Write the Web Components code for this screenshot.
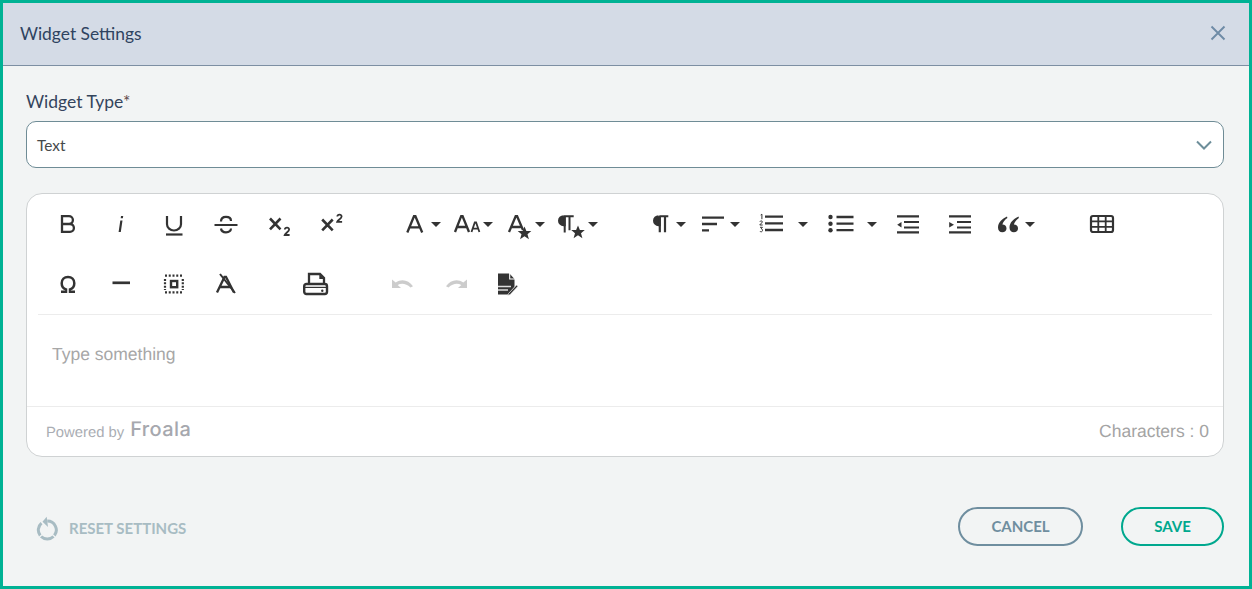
<!DOCTYPE html>
<html lang="en"><head><meta charset="utf-8"><title>Widget Settings</title>
<style>html,body{margin:0;padding:0;background:#f2f4f4}</style></head>
<body>
<widget-dialog>
  <dialog-header slot="header">Widget Settings</dialog-header>
  <select-field label="Widget Type" value="Text"></select-field>
  <rich-editor placeholder="Type something"></rich-editor>
  <dialog-actions></dialog-actions>
</widget-dialog>
<script>
const STAR=(x,y)=>`<path transform="translate(${x} ${y})" d="M0 -6.500l1.900 4.500h4.900l-3.800 3.200 1.400 5-4.400-2.900-4.400 2.900 1.400-5-3.800-3.200h4.900z" fill="#333"/>`;
const ICONS={
bold:'<path d="M6 4.200h7a3.900 3.900 0 0 1 0 7.800H6zM6 12h8a3.900 3.900 0 0 1 0 7.800H6z" fill="none" stroke="#333" stroke-width="2.300"/>',
italic:'<path d="M11.300 8.600h2.200l-1.700 11.400h-2.200zM12 4h2.200l-.3 2.200h-2.200z" fill="#333"/>',
underline:'<path d="M5 4v8.200a7 6.300 0 0 0 14 0V4" fill="none" stroke="#333" stroke-width="2.200"/><path d="M4 22.500h16.500" stroke="#333" stroke-width="2.200"/>',
strike:'<path d="M7 9.500c0-3.200 2.300-4.600 5-4.600s5 1.400 5 4M7 16.500c.3 2.600 2.400 3.800 5 3.800s4.800-1.300 5-3.800" fill="none" stroke="#333" stroke-width="2.200"/><path d="M.5 13h23" stroke="#333" stroke-width="2"/>',
sub:'<path d="M3 6.500l10.500 10.800M13.500 6.500L3 17.300" stroke="#333" stroke-width="2.600" fill="none"/><path d="M17.800 17.500c.3-2.600 4.400-2.400 4.300 0 0 2-3.800 3.500-4.400 5.500h4.900" fill="none" stroke="#333" stroke-width="1.800"/>',
sup:'<path d="M2.200 7.500l10.500 10.800M12.700 7.500L2.200 18.300" stroke="#333" stroke-width="2.600" fill="none"/><path d="M17.300 4.500c.3-2.600 4.400-2.400 4.300 0 0 2-3.800 3.500-4.400 5.300h4.900" fill="none" stroke="#333" stroke-width="1.800"/>',
fontA:'<path d="M4.300 20.500L11 4.200h1.400l6.800 16.300M6.500 15.300h10.500" fill="none" stroke="#333" stroke-width="2.300"/>',
size:'<path d="M0 20L6.200 4.200h1.400L14 20M2 15h10" fill="none" stroke="#333" stroke-width="2.300"/><path d="M16.500 20l3.300-9.600h1.300l3.300 9.600M17.700 16.700h5.500" fill="none" stroke="#333" stroke-width="1.800"/>',
colorStar:'<path d="M2 20L8.700 4.200h1.400L16 18M4.200 15h9.500" fill="none" stroke="#333" stroke-width="2.300"/>'+STAR(17.500,21),
paraStar:'<path d="M9.500 4.200a4.500 4.500 0 0 0 0 9h1.200V4.200h9" fill="#333" stroke="#333" stroke-width="2"/><path d="M10.700 4.200V20.500M15.500 4.200v14" stroke="#333" stroke-width="2" fill="none"/>'+STAR(24,20),
para:'<path d="M10.300 4.200h9M9.500 4.200a4.500 4.500 0 0 0 0 9h1.300V4.200" fill="#333" stroke="#333" stroke-width="2"/><path d="M10.800 4.200V20.200M16 4.200v16" stroke="#333" stroke-width="2.200" fill="none"/>',
align:'<path d="M2 5.700h22M2 12h15M2 18.300h7" stroke="#333" stroke-width="2.300" fill="none"/>',
ol:'<path d="M6 4.700h18M6 11.300h18M6 18h18" stroke="#333" stroke-width="2.300" fill="none"/><path d="M1.700 3l1.200-.8v5M.9 9.700c.3-1.200 2.600-1 2.500.3 0 1-2.400 1.700-2.600 3h2.900M1 15.300h2.400l-1.200 1.500c1.800 0 1.800 3-.1 3-.6 0-1-.2-1.200-.6" fill="none" stroke="#333" stroke-width="1"/>',
ul:'<circle cx="2.500" cy="5" r="2.200" fill="#333"/><circle cx="2.500" cy="11.700" r="2.200" fill="#333"/><circle cx="2.500" cy="18.200" r="2.200" fill="#333"/><path d="M8.500 5h17M8.500 11.700h17M8.500 18.200h17" stroke="#333" stroke-width="2.300" fill="none"/>',
outdent:'<path d="M1 4.300h22M8 10h15M8 15.500h15M1 20.300h22" stroke="#333" stroke-width="2.200" fill="none"/><path d="M5.500 10v5.500L1.200 12.700z" fill="#333"/>',
indent:'<path d="M1 4.300h22M9 10h14M9 15.500h14M1 20.300h22" stroke="#333" stroke-width="2.200" fill="none"/><path d="M1.200 10v5.500l4.800-2.800z" fill="#333"/>',
quote:'<path d="M11 4.500C6 7 2 10.500 2 15.500c0 2.700 1.700 4.800 4.400 4.800 2.300 0 4.100-1.700 4.100-3.900s-1.700-3.800-4.100-3.800c.5-2.500 2.600-5 5-6.600zM22.500 4.500C17.500 7 13.500 10.500 13.500 15.500c0 2.700 1.700 4.800 4.400 4.800 2.300 0 4.100-1.700 4.100-3.900s-1.700-3.800-4.100-3.800c.5-2.500 2.600-5 5-6.600z" fill="#333"/>',
table:'<rect x="2" y="4" width="22" height="16" rx="2" fill="none" stroke="#333" stroke-width="2.200"/><path d="M2 9.400h22M2 14.800h22M9.300 4v16M16.700 4v16" stroke="#333" stroke-width="1.800" fill="none"/>',
omega:'<path d="M5 19.800h5v-2.400c-2.800-1-4.300-3.300-4.300-6.200 0-3.700 2.600-6.200 6.300-6.200s6.300 2.500 6.300 6.200c0 2.900-1.500 5.200-4.300 6.200v2.400h5" fill="none" stroke="#333" stroke-width="2.500"/>',
hr:'<path d="M3.500 10.800h17.500" stroke="#333" stroke-width="2.700"/>',
select:'<path d="M3 3.600H21M3 20.400H21" stroke="#333" stroke-width="2.200" stroke-dasharray="2 1.750" fill="none"/><path d="M3 6.900V18M20.800 6.900V18" stroke="#333" stroke-width="2.200" stroke-dasharray="2 1.400" fill="none"/><path d="M7 3v0" /><rect x="9" y="9" width="6.200" height="6.200" fill="none" stroke="#333" stroke-width="2.400"/>',
clear:'<path d="M3 20.500L10.500 5h1.500l8 15.500M6 15h11" fill="none" stroke="#333" stroke-width="2.300"/><path d="M6 2L21 21" stroke="#333" stroke-width="2"/>',
print:'<path d="M6 12V2h11l4 4v6" fill="none" stroke="#333" stroke-width="2.300"/><path d="M16.300 2v5H21z" fill="#333"/><rect x="1.200" y="12" width="22.800" height="10" rx="2.200" fill="none" stroke="#333" stroke-width="2.400"/><path d="M1.500 15.400h22" stroke="#333" stroke-width="1.200"/><circle cx="19.300" cy="18.700" r="1.200" fill="#333"/>',
undo:'<path d="M1 7.500v8.500h9l-3.300-3c3.900-2.300 8.700-1.300 12.800 2.500l2.500-1.300C17.800 8.400 11 6.200 4.700 10.500z" fill="#ccc"/>',
redo:'<path d="M23 7.500v8.500h-9l3.300-3c-3.900-2.300-8.700-1.300-12.800 2.500L2 14.200C6.200 8.400 13 6.200 19.300 10.500z" fill="#ccc"/>',
pdf:'<path d="M2 1.500h11.500L18.500 7v8l-4.500 6-1 1.500H2z" fill="#333"/><path d="M13.700 1v6h5.500" fill="none" stroke="#fff" stroke-width="1.100"/><path d="M2 14.500h13M2 18h10" stroke="#ddd" stroke-width="1.300"/><path d="M12.500 21.500l8-8.500 1.500 1.300-8 8.500-2.300 .8z" fill="#333" stroke="#fff" stroke-width=".7"/>'
};

class WidgetDialog extends HTMLElement{constructor(){super();this.attachShadow({mode:'open'}).innerHTML=`<style>
:host{display:flex;flex-direction:column;box-sizing:border-box;width:1252px;height:589px;border:3px solid #00b294;background:#f2f4f4;font-family:Lato,sans-serif}
main{display:flex;flex-direction:column;flex:1;padding:24px 25px 0 23px}
</style><slot name="header"></slot><main><slot></slot></main>`}}

class DialogHeader extends HTMLElement{constructor(){super();this.attachShadow({mode:'open'}).innerHTML=`<style>
:host{display:flex;align-items:center;justify-content:space-between;box-sizing:border-box;height:63px;padding:0 23px 2px 17px;background:#d4dbe6;border-bottom:1px solid #7d8fa3;color:#2f4360;font:17.400px Lato,sans-serif}
svg{display:block;width:16px;height:16px}
</style><span><slot></slot></span><svg viewBox="0 0 16 16" aria-label="Close"><path d="M1.500 1.500l13 13M14.500 1.500l-13 13" stroke="#6e8ba6" stroke-width="1.900" fill="none"/></svg>`}}

class SelectField extends HTMLElement{constructor(){super();this.attachShadow({mode:'open'}).innerHTML=`<style>
:host{display:block;margin-bottom:25px}
label{display:block;font:17.500px/24px Lato,sans-serif;color:#34445c;margin-bottom:7px;height:24px}
i{font-style:normal;color:#5f4a4a}
.box{display:flex;align-items:center;justify-content:space-between;box-sizing:border-box;height:47px;padding:0 11px 0 10px;background:#fff;border:1px solid #6f8c96;border-radius:10px;font:15.400px Lato,sans-serif;color:#45494b}
svg{width:16px;height:10px;display:block}
</style><label>${this.getAttribute('label')}<i>*</i></label><div class="box"><span>${this.getAttribute('value')}</span><svg viewBox="0 0 16 10"><path d="M1 1.500l7 7 7-7" fill="none" stroke="#6d8e9a" stroke-width="2"/></svg></div>`}}

class ToolButton extends HTMLElement{constructor(){super();
const w=+this.getAttribute('w')||52.7,ic=this.getAttribute('icon'),c=this.getAttribute('caret');
const left=c!==null?0:(w-24)/2;
const caret=c!==null?`<b style="margin-left:${c-24-5}px"></b>`:'';
this.attachShadow({mode:'open'}).innerHTML=`<style>
:host{display:flex;align-items:center;flex:none;height:100%;width:${w}px}
svg{display:block;width:24px;height:24px;overflow:visible;flex:none}
b{display:block;width:0;height:0;border-left:5px solid transparent;border-right:5px solid transparent;border-top:5.500px solid #333;margin-top:1px}
</style><svg viewBox="0 0 24 24" style="margin-left:${left}px">${ICONS[ic]}</svg>${caret}`;}}

class RichEditor extends HTMLElement{constructor(){super();
const row=a=>a.map(([i,w,c,m])=>`<tool-button icon="${i}"${w?` w="${w}"`:''}${c?` caret="${c}"`:''}${m?` style="margin-left:${m}px"`:''}></tool-button>`).join('');
this.attachShadow({mode:'open'}).innerHTML=`<style>
:host{display:block;box-sizing:border-box;height:264px;background:#fff;border:1px solid #cfd2d3;border-radius:16px;font-family:"Liberation Sans",Arial,sans-serif;text-rendering:geometricPrecision}
.bar{margin:0 11px;height:120px;border-bottom:1px solid #ececec;padding-left:4px}
.r{display:flex;height:60px}
.area{height:92px;box-sizing:border-box;padding:27px 0 0 25px;font-size:17.500px;line-height:24px;color:#a7a7a7;border-bottom:1px solid #ececec}
.foot{display:flex;align-items:center;justify-content:space-between;height:49px;padding:0 14px 2px 19px;color:#a7a7a7}
.p{font-size:14.800px;display:flex;align-items:baseline;gap:6px;color:#aaadb3;position:relative;top:-2px}
.f{font:500 20px Inter,sans-serif;letter-spacing:.4px;color:#a6a8ae;position:relative;top:-1px}
.c{font-size:17.500px;color:#a4a4a4}
</style>
<div class="bar">
<div class="r">${row([['bold'],['italic'],['underline'],['strike'],['sub'],['sup'],
['fontA',52,33.500,44.800],['size',52,33],['colorStar',47,33.500],['paraStar',95,39],
['para',51,32.500],['align',59,35],['ol',69,44],['ul',54,44],['outdent',52],['indent',52],
['quote',93,34,10],['table',24]])}</div>
<div class="r">${row([['omega'],['hr'],['select'],['clear'],['print',124.400],['undo',52],['redo',53.600],['pdf',50.400]])}</div>
</div>
<div class="area">${this.getAttribute('placeholder')}</div>
<div class="foot"><span class="p"><span>Powered by</span><span class="f">Froala</span></span><span class="c">Characters : 0</span></div>`}}

class DialogActions extends HTMLElement{constructor(){super();this.attachShadow({mode:'open'}).innerHTML=`<style>
:host{display:flex;align-items:center;margin-top:50px;height:39px;font:700 15px Lato,sans-serif}
.reset{display:flex;align-items:center;gap:11px;margin-left:10px;color:#a8bcc3;margin-top:3px;flex:1}
svg{width:22px;height:26px;display:block}
pill-button+pill-button{margin-left:38px}
</style>
<span class="reset"><svg viewBox="0 0 22 26"><path d="M11.300 6A9 9 0 0 1 18.400 20.500M17.550 21.500A9 9 0 0 1 5.050 21.500M4.200 20.500A9 9 0 0 1 5.500 8.100" fill="none" stroke="#a8bcc3" stroke-width="3"/><path d="M10.700 1.700L12 12 6.500 6.700z" fill="#a8bcc3"/></svg><span>RESET SETTINGS</span></span>
<pill-button color="#6f8e9f" w="125">CANCEL</pill-button><pill-button color="#00a88e" w="103">SAVE</pill-button>`}}

class PillButton extends HTMLElement{constructor(){super();const col=this.getAttribute('color');this.attachShadow({mode:'open'}).innerHTML=`<style>
:host{display:flex;align-items:center;justify-content:center;box-sizing:border-box;height:39px;padding-bottom:2px;width:${this.getAttribute('w')}px;border:2px solid ${col};border-radius:20px;color:${col};font:700 15px Lato,sans-serif}
</style><slot></slot>`}}

customElements.define('tool-button',ToolButton);
customElements.define('pill-button',PillButton);
customElements.define('widget-dialog',WidgetDialog);
customElements.define('dialog-header',DialogHeader);
customElements.define('select-field',SelectField);
customElements.define('rich-editor',RichEditor);
customElements.define('dialog-actions',DialogActions);
</script>
</body></html>
